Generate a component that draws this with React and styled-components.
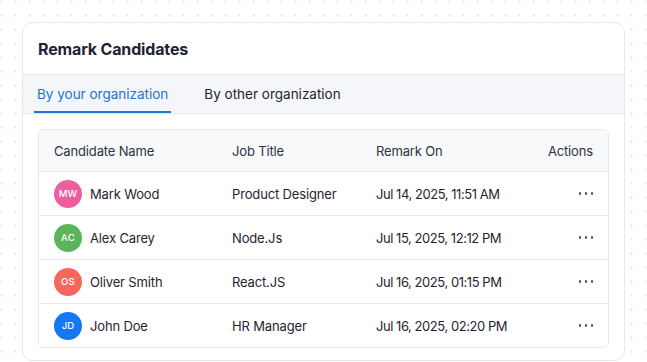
import React from "react";
import styled, { createGlobalStyle } from "styled-components";

const GlobalStyle = createGlobalStyle`
  html, body {
    margin: 0;
    padding: 0;
  }
  body {
    min-height: 362px;
    background-color: #ffffff;
    background-image: radial-gradient(circle, #e3e4e7 1.1px, transparent 1.5px);
    background-size: 14px 14px;
    background-position: -5.5px -5.5px;
    font-family: Inter, "Noto Sans", sans-serif;
    -webkit-font-smoothing: antialiased;
  }
`;

const Page = styled.div`
  padding: 22px 0 0 22px;
`;

const Card = styled.section`
  width: 603px;
  height: 339px;
  box-sizing: border-box;
  background: #ffffff;
  border: 1px solid #e6e8ec;
  border-radius: 10px;
  display: flex;
  flex-direction: column;
  overflow: hidden;
`;

const CardHeader = styled.div`
  height: 51px;
  display: flex;
  align-items: center;
  padding: 0 15px;
`;

const Title = styled.h2`
  margin: 0;
  font-size: 16px;
  font-weight: 700;
  color: #1d2433;
  letter-spacing: -0.15px;
`;

const TabBar = styled.div`
  height: 38px;
  display: flex;
  align-items: stretch;
  gap: 30px;
  padding: 0 11px;
  background: #f4f6f9;
  border-top: 1px solid #e6e8ec;
  border-bottom: 1px solid #e6e8ec;
`;

const Tab = styled.button`
  all: unset;
  cursor: pointer;
  display: flex;
  align-items: center;
  padding: 0 3px;
  font-family: Inter, "Noto Sans", sans-serif;
  font-size: 13.5px;
  font-weight: 400;
  color: ${(p) => (p.$active ? "#1b74d4" : "#1f2430")};
  box-shadow: ${(p) => (p.$active ? "inset 0 -2px 0 #1b78d9" : "none")};
`;

const Body = styled.div`
  padding: 15px 15px 0;
`;

const Table = styled.div`
  border: 1px solid #e6e8ec;
  border-radius: 6px;
  overflow: hidden;
`;

const Row = styled.div`
  display: grid;
  grid-template-columns: 178px 144px minmax(0, 1fr) 80px;
  align-items: center;
  height: ${(p) => (p.$head ? "41px" : "43px")};
  padding: 0 15px;
  background: ${(p) => (p.$head ? "#f8f9fb" : "#ffffff")};
  border-bottom: ${(p) => (p.$last ? "none" : "1px solid #e8eaee")};
  font-size: 13px;
  letter-spacing: -0.15px;
  color: ${(p) => (p.$head ? "#2d3340" : "#1f2430")};
`;

const Cell = styled.div`
  display: flex;
  align-items: center;
  justify-content: ${(p) => (p.$right ? "flex-end" : "flex-start")};
  gap: 8px;
  white-space: nowrap;
  letter-spacing: ${(p) => (p.$tight ? "-0.45px" : "inherit")};
`;

const Avatar = styled.span`
  width: 28px;
  height: 28px;
  border-radius: 50%;
  background: ${(p) => p.$color};
  color: #ffffff;
  font-size: 9.5px;
  font-weight: 500;
  display: flex;
  align-items: center;
  justify-content: center;
  flex-shrink: 0;
  letter-spacing: 0.2px;
`;

const MoreButton = styled.button`
  all: unset;
  cursor: pointer;
  display: flex;
  align-items: center;
  gap: 3.5px;
  padding: 4px 0;
`;

const Dot = styled.span`
  width: 2.5px;
  height: 2.5px;
  border-radius: 50%;
  background: #4a505c;
`;

const rows = [
  { initials: "MW", name: "Mark Wood", color: "#ee5f9f", job: "Product Designer", date: "Jul 14, 2025, 11:51 AM" },
  { initials: "AC", name: "Alex Carey", color: "#5cb55c", job: "Node.Js", date: "Jul 15, 2025, 12:12 PM" },
  { initials: "OS", name: "Oliver Smith", color: "#f5685e", job: "React.JS", date: "Jul 16, 2025, 01:15 PM" },
  { initials: "JD", name: "John Doe", color: "#1677f5", job: "HR Manager", date: "Jul 16, 2025, 02:20 PM" },
];

export default function App() {
  return (
    <>
      <GlobalStyle />
      <Page>
        <Card>
          <CardHeader>
            <Title>Remark Candidates</Title>
          </CardHeader>
          <TabBar>
            <Tab $active>By your organization</Tab>
            <Tab>By other organization</Tab>
          </TabBar>
          <Body>
            <Table>
              <Row $head>
                <Cell>Candidate Name</Cell>
                <Cell>Job Title</Cell>
                <Cell>Remark On</Cell>
                <Cell $right>Actions</Cell>
              </Row>
              {rows.map((r, i) => (
                <Row key={r.name} $last={i === rows.length - 1}>
                  <Cell>
                    <Avatar $color={r.color}>{r.initials}</Avatar>
                    {r.name}
                  </Cell>
                  <Cell>{r.job}</Cell>
                  <Cell $tight>{r.date}</Cell>
                  <Cell $right>
                    <MoreButton aria-label="More actions">
                      <Dot />
                      <Dot />
                      <Dot />
                    </MoreButton>
                  </Cell>
                </Row>
              ))}
            </Table>
          </Body>
        </Card>
      </Page>
    </>
  );
}
